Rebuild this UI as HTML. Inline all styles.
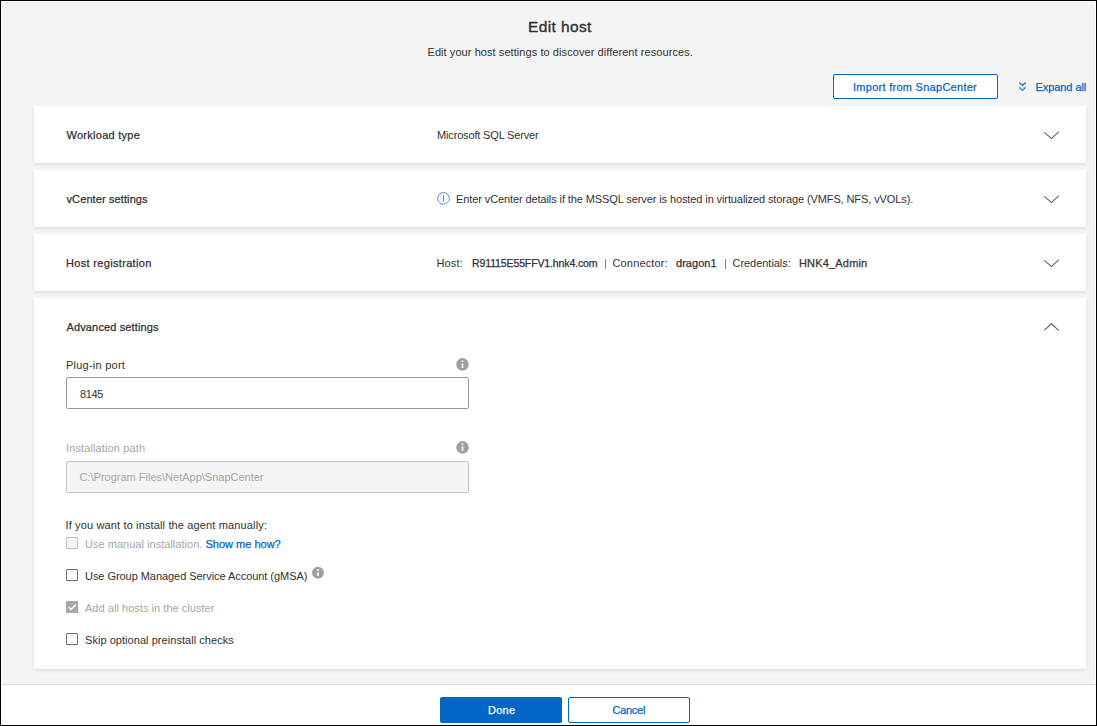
<!DOCTYPE html>
<html><head><meta charset="utf-8">
<style>
*{box-sizing:border-box;margin:0;padding:0}
html,body{width:1097px;height:726px;overflow:hidden;background:#fff}
body{font-family:"Liberation Sans",sans-serif;position:relative}
.a{position:absolute}
.t{position:absolute;white-space:nowrap;line-height:1}
.card{position:absolute;left:34px;width:1052px;background:#fff;box-shadow:0 1.6px 3.6px rgba(0,0,0,.1),0 .3px .9px rgba(0,0,0,.08)}
</style></head><body>
<div class="a" style="left:0;top:0;width:1097px;height:726px;border:1px solid #000;background:#fff"></div>
<div class="a" style="left:2px;top:2px;width:1093px;height:682px;background:#f4f4f4"></div>

<div class="a" style="left:833px;top:74px;width:165px;height:25px;border:1px solid #0066c4;border-radius:2px;background:#fff"></div>

<div class="card" style="top:106px;height:57px"></div>
<div class="card" style="top:170px;height:57px"></div>
<div class="card" style="top:234px;height:57px"></div>
<div class="card" style="top:298px;height:371px"></div>

<div class="a" style="left:605px;top:259px;width:1px;height:10px;background:#888"></div>
<div class="a" style="left:725px;top:259px;width:1px;height:10px;background:#888"></div>

<div class="a" style="left:66px;top:377px;width:403px;height:32px;border:1px solid #999;border-radius:2px;background:#fff"></div>
<div class="a" style="left:66px;top:461px;width:403px;height:32px;border:1px solid #c6c6c6;border-radius:2px;background:#f4f4f4"></div>

<div class="a" style="left:66px;top:537px;width:12px;height:12px;border:1px solid #bdbdbd;border-radius:1px;background:#f4f4f4"></div>
<div class="a" style="left:66px;top:569px;width:12px;height:12px;border:1px solid #6e6e6e;border-radius:1px;background:#fff"></div>
<div class="a" style="left:66px;top:601px;width:12px;height:12px;background:#a8a8a8"></div>
<div class="a" style="left:66px;top:633px;width:12px;height:12px;border:1px solid #6e6e6e;border-radius:1px;background:#fff"></div>

<div class="a" style="left:1px;top:684px;width:1095px;height:41px;background:#fff;border-top:1px solid #dddddd"></div>
<div class="a" style="left:440px;top:697px;width:122px;height:26px;border-radius:2px;background:#0066c4"></div>
<div class="a" style="left:568px;top:697px;width:122px;height:26px;border:1px solid #0066c4;border-radius:2px;background:#fff"></div>

<svg class="a" style="left:0;top:0" width="1097" height="726" viewBox="0 0 1097 726">
 <g fill="none" stroke="#0066c4" stroke-width="1.15">
  <path d="M1019.3 82.5 L1022.5 85.4 L1025.6 82.5 M1019.3 87.3 L1022.5 90.3 L1025.6 87.3"/>
 </g>
 <g fill="none" stroke="#5e5e5e" stroke-width="1.1">
  <path d="M1044.3 132.3 L1051.5 138.6 L1058.8 131.7"/>
  <path d="M1044.3 196.3 L1051.5 202.6 L1058.8 195.7"/>
  <path d="M1044.3 260.3 L1051.5 266.6 L1058.8 259.7"/>
  <path d="M1044.3 330.2 L1051.5 323.8 L1058.8 330.6"/>
 </g>
 <g>
  <circle cx="443.5" cy="198.35" r="5.8" fill="none" stroke="#4a8ef0" stroke-width="1"/>
  <rect x="442.95" y="195.2" width="1.1" height="6.4" fill="#4a8ef0"/>
 </g>
 <g fill="#a0a0a0">
  <circle cx="462.5" cy="364.4" r="6.3"/>
  <circle cx="462.5" cy="447.4" r="6.3"/>
  <circle cx="318" cy="572.8" r="6"/>
 </g>
 <g fill="#fff">
  <rect x="461.7" y="363.4" width="1.6" height="4.6"/><rect x="461.7" y="360.4" width="1.6" height="1.6"/>
  <rect x="461.7" y="446.4" width="1.6" height="4.6"/><rect x="461.7" y="443.4" width="1.6" height="1.6"/>
  <rect x="317.2" y="572.2" width="1.6" height="3.7"/><rect x="317.2" y="569.0" width="1.6" height="1.8"/>
 </g>
 <path d="M68.5 607 L71 609.5 L76 604.5" fill="none" stroke="#fff" stroke-width="1.5"/>
</svg>

<div class="t" style="left:528.0px;top:19.01px;font-size:15.5px;font-weight:400;letter-spacing:0.375px;color:#323130;-webkit-text-stroke:0.35px #323130">Edit host</div>
<div class="t" style="left:427.5px;top:47.01px;font-size:11px;font-weight:400;letter-spacing:0.069px;color:#323130;-webkit-text-stroke:0px #323130">Edit your host settings to discover different resources.</div>
<div class="t" style="left:853.0px;top:82.01px;font-size:11px;font-weight:400;letter-spacing:0.276px;color:#0066c4;-webkit-text-stroke:0.25px #0066c4">Import from SnapCenter</div>
<div class="t" style="left:1035.5px;top:82.01px;font-size:11px;font-weight:400;letter-spacing:-0.067px;color:#0066c4;-webkit-text-stroke:0.25px #0066c4">Expand all</div>
<div class="t" style="left:66.5px;top:130.01px;font-size:11px;font-weight:400;letter-spacing:0.267px;color:#323130;-webkit-text-stroke:0.25px #323130">Workload type</div>
<div class="t" style="left:437.0px;top:130.01px;font-size:11px;font-weight:400;letter-spacing:-0.158px;color:#323130;-webkit-text-stroke:0px #323130">Microsoft SQL Server</div>
<div class="t" style="left:66.5px;top:194.01px;font-size:11px;font-weight:400;letter-spacing:0.107px;color:#323130;-webkit-text-stroke:0.25px #323130">vCenter settings</div>
<div class="t" style="left:456.0px;top:194.01px;font-size:11px;font-weight:400;letter-spacing:-0.101px;color:#323130;-webkit-text-stroke:0px #323130">Enter vCenter details if the MSSQL server is hosted in virtualized storage (VMFS, NFS, vVOLs).</div>
<div class="t" style="left:66.0px;top:258.01px;font-size:11px;font-weight:400;letter-spacing:0.325px;color:#323130;-webkit-text-stroke:0.25px #323130">Host registration</div>
<div class="t" style="left:436.5px;top:258.01px;font-size:11px;font-weight:400;letter-spacing:0.15px;color:#323130;-webkit-text-stroke:0px #323130">Host:</div>
<div class="t" style="left:472.0px;top:258.01px;font-size:10.6px;font-weight:400;letter-spacing:-0.171px;color:#323130;-webkit-text-stroke:0.25px #323130">R91115E55FFV1.hnk4.com</div>
<div class="t" style="left:612.5px;top:258.01px;font-size:11px;font-weight:400;letter-spacing:0.156px;color:#323130;-webkit-text-stroke:0px #323130">Connector:</div>
<div class="t" style="left:676.0px;top:258.01px;font-size:11px;font-weight:400;letter-spacing:0.033px;color:#323130;-webkit-text-stroke:0.25px #323130">dragon1</div>
<div class="t" style="left:732.5px;top:258.01px;font-size:11px;font-weight:400;letter-spacing:-0.036px;color:#323130;-webkit-text-stroke:0px #323130">Credentials:</div>
<div class="t" style="left:799.0px;top:258.01px;font-size:11px;font-weight:400;letter-spacing:0.178px;color:#323130;-webkit-text-stroke:0.25px #323130">HNK4_Admin</div>
<div class="t" style="left:66.5px;top:322.01px;font-size:11px;font-weight:400;letter-spacing:0.138px;color:#323130;-webkit-text-stroke:0.25px #323130">Advanced settings</div>
<div class="t" style="left:66.0px;top:360.01px;font-size:11px;font-weight:400;letter-spacing:0.236px;color:#323130;-webkit-text-stroke:0px #323130">Plug-in port</div>
<div class="t" style="left:80.0px;top:389.01px;font-size:11px;font-weight:400;letter-spacing:-0.4px;color:#323130;-webkit-text-stroke:0px #323130">8145</div>
<div class="t" style="left:66.0px;top:443.01px;font-size:11px;font-weight:400;letter-spacing:0.125px;color:#a6a6a6;-webkit-text-stroke:0px #a6a6a6">Installation path</div>
<div class="t" style="left:79.5px;top:472.01px;font-size:11px;font-weight:400;letter-spacing:0.0px;color:#a6a6a6;-webkit-text-stroke:0px #a6a6a6">C:\Program Files\NetApp\SnapCenter</div>
<div class="t" style="left:65.5px;top:520.01px;font-size:11px;font-weight:400;letter-spacing:0.141px;color:#323130;-webkit-text-stroke:0px #323130">If you want to install the agent manually:</div>
<div class="t" style="left:85.0px;top:539.01px;font-size:11px;font-weight:400;letter-spacing:0.026px;color:#a6a6a6;-webkit-text-stroke:0px #a6a6a6">Use manual installation.</div>
<div class="t" style="left:205.5px;top:539.01px;font-size:11px;font-weight:400;letter-spacing:0.0px;color:#0066c4;-webkit-text-stroke:0.25px #0066c4">Show me how?</div>
<div class="t" style="left:85.0px;top:571.01px;font-size:11px;font-weight:400;letter-spacing:-0.051px;color:#323130;-webkit-text-stroke:0px #323130">Use Group Managed Service Account (gMSA)</div>
<div class="t" style="left:85.0px;top:603.01px;font-size:11px;font-weight:400;letter-spacing:0.037px;color:#a6a6a6;-webkit-text-stroke:0px #a6a6a6">Add all hosts in the cluster</div>
<div class="t" style="left:85.0px;top:635.01px;font-size:11px;font-weight:400;letter-spacing:0.047px;color:#323130;-webkit-text-stroke:0px #323130">Skip optional preinstall checks</div>
<div class="t" style="left:488.0px;top:705.01px;font-size:11px;font-weight:400;letter-spacing:0.267px;color:#ffffff;-webkit-text-stroke:0.25px #ffffff">Done</div>
<div class="t" style="left:612.5px;top:705.01px;font-size:11px;font-weight:400;letter-spacing:-0.28px;color:#0066c4;-webkit-text-stroke:0.25px #0066c4">Cancel</div>
</body></html>
